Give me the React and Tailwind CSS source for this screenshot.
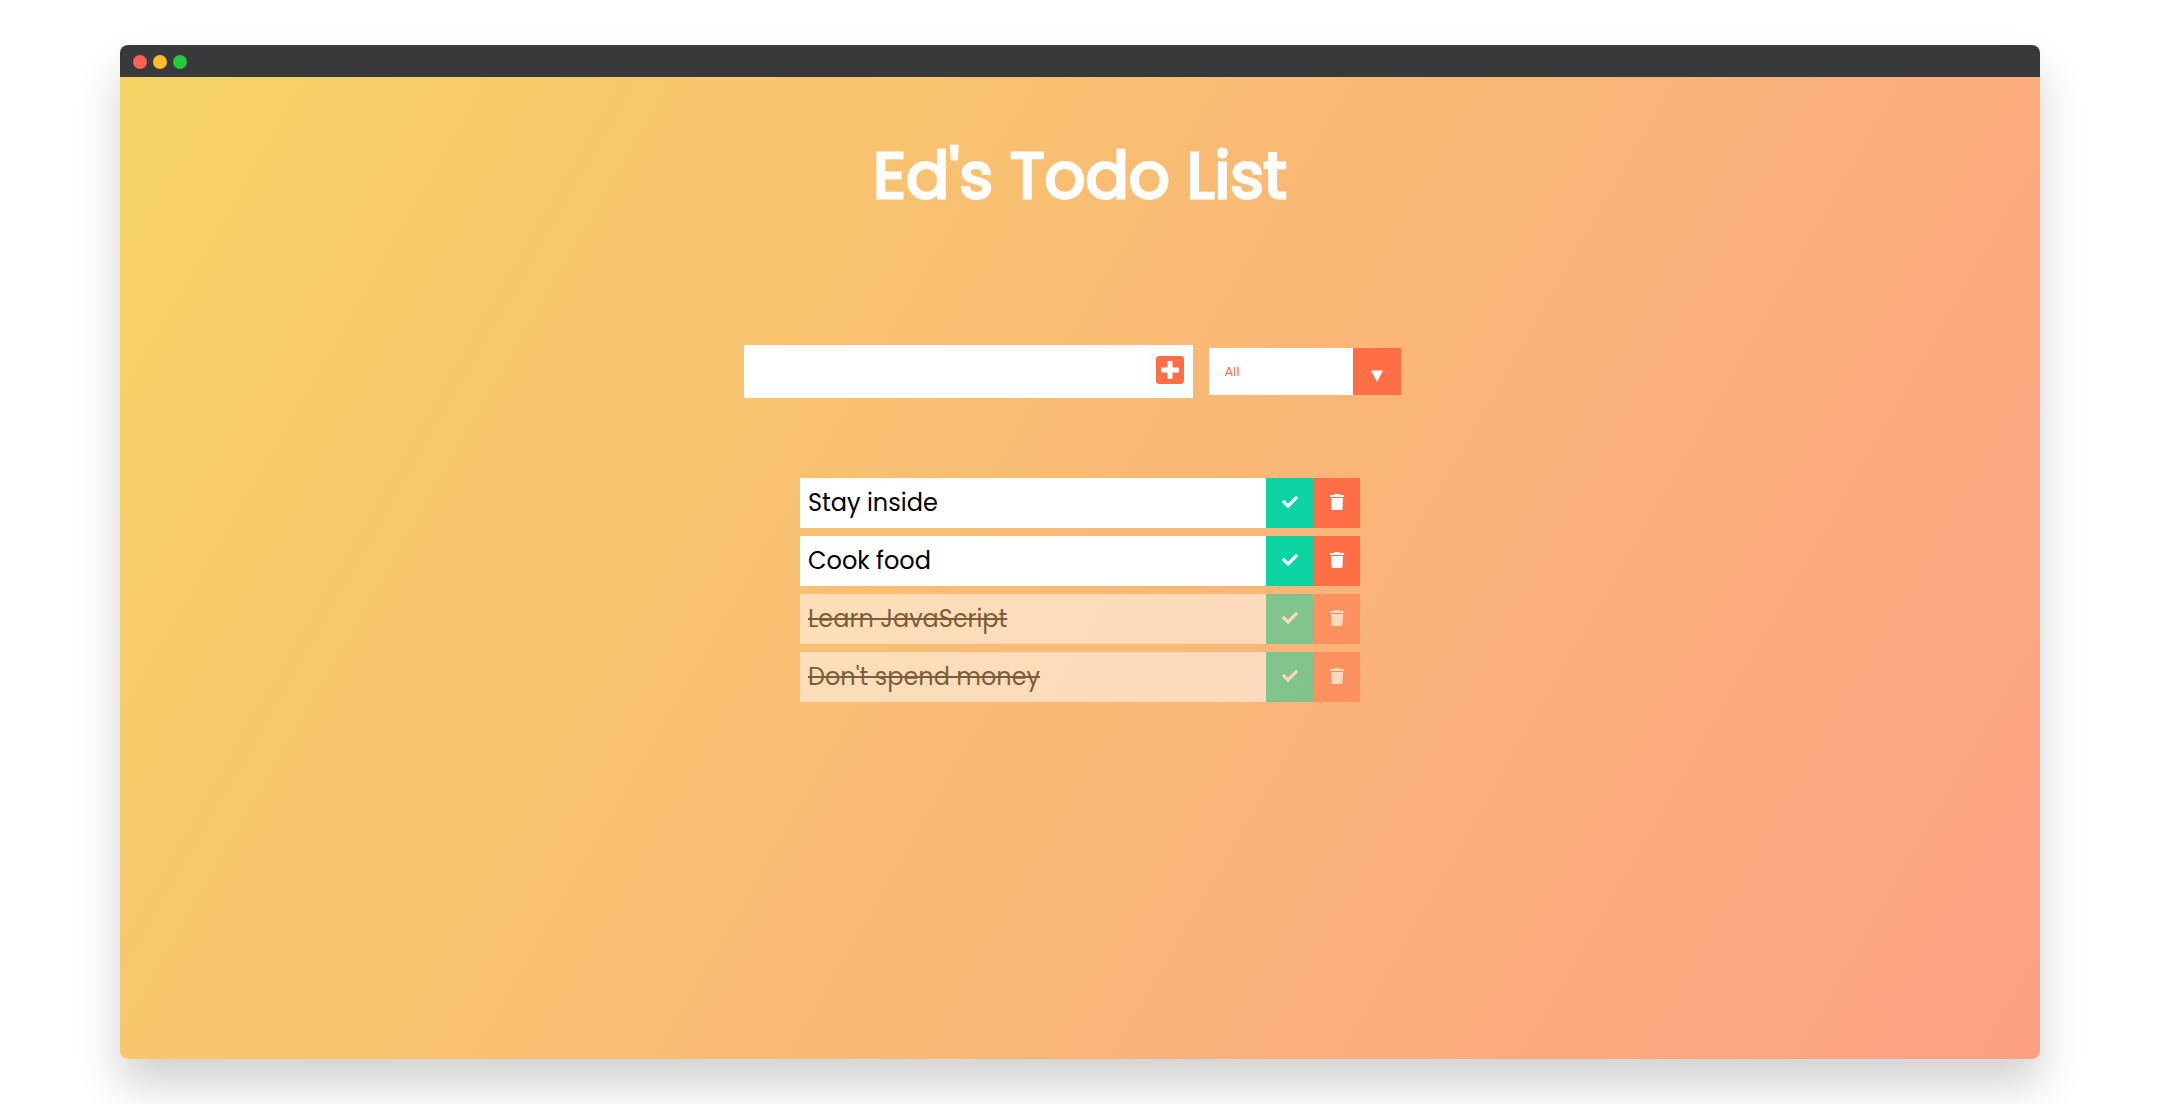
import { useState } from "react";
import { FaCheck, FaPlusSquare } from "react-icons/fa";

const initialTodos = [
  { id: 1, text: "Stay inside", done: false },
  { id: 2, text: "Cook food", done: false },
  { id: 3, text: "Learn JavaScript", done: true },
  { id: 4, text: "Don't spend money", done: true },
];

function TitleBar() {
  return (
    <div className="flex h-8 shrink-0 items-center gap-1.5 bg-[#38393a] px-[13px] pt-0.5">
      <span className="size-3.5 rounded-full bg-[#ff5f56]" />
      <span className="size-3.5 rounded-full bg-[#ffbd2e]" />
      <span className="size-3.5 rounded-full bg-[#27c93f]" />
    </div>
  );
}

function TrashIcon() {
  return (
    <svg viewBox="0 0 14 16" className="h-4 w-3.5 fill-current" aria-hidden="true">
      <path d="M0 1H4L4.7 0H9.3L10 1H14V3H0ZM1 4H13L12.4 15.2Q12.3 16 11.5 16H2.5Q1.7 16 1.6 15.2Z" />
    </svg>
  );
}

function TodoForm({ onAdd, filter, onFilter }) {
  const [text, setText] = useState("");
  const submit = (e) => {
    e.preventDefault();
    if (text.trim()) onAdd(text.trim());
    setText("");
  };
  return (
    <form onSubmit={submit} className="mt-[118px] flex items-center justify-center gap-4 pr-4">
      <div className="flex h-[53px]">
        <input
          type="text"
          aria-label="New todo"
          value={text}
          onChange={(e) => setText(e.target.value)}
          className="w-[299px] bg-white px-2 text-2xl outline-none sm:w-[405px]"
        />
        <button type="submit" aria-label="Add todo" className="flex w-11 items-center justify-center bg-[#f7fffe] pr-0.5 pb-1 text-[#ff6f47]">
          <FaPlusSquare className="h-8 w-7" />
        </button>
      </div>
      <div className="relative flex h-[47px]">
        <select
          aria-label="Filter todos"
          value={filter}
          onChange={(e) => onFilter(e.target.value)}
          className="w-48 appearance-none bg-white pl-4 text-[13px] text-[#ff6f47] outline-none"
        >
          <option value="all">All</option>
          <option value="completed">Completed</option>
          <option value="uncompleted">Uncompleted</option>
        </select>
        <span className="pointer-events-none absolute inset-y-0 right-0 flex w-12 items-center justify-center bg-[#ff6f47] pt-2">
          <svg viewBox="0 0 12 12" className="size-3 fill-white" aria-hidden="true">
            <path d="M0 0.5H12L6 12Z" />
          </svg>
        </span>
      </div>
    </form>
  );
}

function TodoItem({ todo, onToggle, onDelete }) {
  return (
    <li className={todo.done ? "flex h-[50px] opacity-50" : "flex h-[50px]"}>
      <span
        className={
          todo.done
            ? "flex flex-1 items-center bg-white px-2 text-2xl text-black line-through decoration-2"
            : "flex flex-1 items-center bg-white px-2 text-2xl text-black"
        }
      >
        {todo.text}
      </span>
      <button type="button" aria-label={"Complete " + todo.text} onClick={onToggle} className="flex w-12 items-center justify-center bg-[#0bd4a2] pb-0.5 text-white">
        <FaCheck className="size-4" />
      </button>
      <button type="button" aria-label={"Delete " + todo.text} onClick={onDelete} className="flex w-[46px] items-center justify-center bg-[#ff6f47] pb-0.5 text-white">
        <TrashIcon />
      </button>
    </li>
  );
}

export default function App() {
  const [todos, setTodos] = useState(initialTodos);
  const [filter, setFilter] = useState("all");
  const shown = todos.filter((t) => filter === "all" || t.done === (filter === "completed"));

  return (
    <div className="flex min-h-screen flex-col overflow-hidden bg-white px-[120px] py-[45px] font-['Poppins','Inter',sans-serif]">
      <div className="flex grow flex-col overflow-hidden rounded-lg shadow-[0_26px_44px_rgba(0,0,0,0.18)]">
        <TitleBar />
        <main className="grow bg-[linear-gradient(120deg,#f6d365_0%,#fda085_100%)] pt-12">
          <h1 className="text-center text-[64px] leading-[102px] font-normal text-white [-webkit-text-stroke:3px_white]">Ed's Todo List</h1>
          <TodoForm
            filter={filter}
            onFilter={setFilter}
            onAdd={(text) => setTodos([...todos, { id: Date.now(), text, done: false }])}
          />
          <ul className="mx-auto mt-20 flex max-w-[560px] flex-col gap-2">
            {shown.map((todo) => (
              <TodoItem
                key={todo.id}
                todo={todo}
                onToggle={() => setTodos(todos.map((t) => (t.id === todo.id ? { ...t, done: !t.done } : t)))}
                onDelete={() => setTodos(todos.filter((t) => t.id !== todo.id))}
              />
            ))}
          </ul>
        </main>
      </div>
    </div>
  );
}
